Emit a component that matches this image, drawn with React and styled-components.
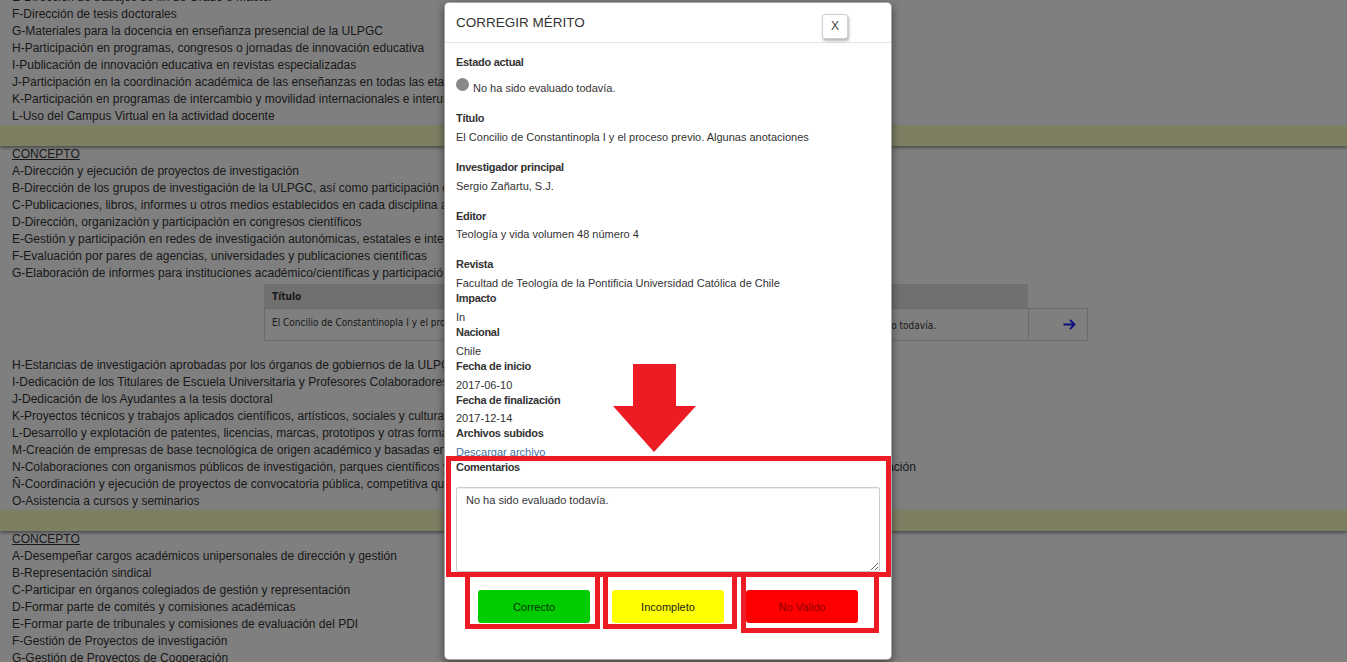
import React from 'react';
import styled, { createGlobalStyle } from 'styled-components';

const GlobalStyle = createGlobalStyle`
  html, body {
    margin: 0;
    padding: 0;
    background: #fff;
  }
  body {
    font-family: "Liberation Sans", Arial, sans-serif;
    color: #333;
    overflow: hidden;
  }
  * {
    box-sizing: border-box;
  }
`;

const Page = styled.div`
  position: relative;
  width: 1347px;
  height: 662px;
  overflow: hidden;
  background: #fff;
`;

/* page behind the dialog, scrolled a little */
const Content = styled.div`
  margin-top: -11px;
  font-size: 12px;
  line-height: 17px;
`;

const ConceptList = styled.ul`
  list-style: none;
  margin: 0;
  padding: 0 0 0 12px;
`;

const ConceptItem = styled.li`
  white-space: nowrap;
  text-decoration: ${(p) => (p.$heading ? 'underline' : 'none')};
`;

const Band = styled.div`
  height: 21px;
  background: #fdfdc4;
  box-shadow: 0 2px 3px rgba(0, 0, 0, 0.4);
`;

const MeritTable = styled.div`
  display: grid;
  grid-template-columns: 764px 60px;
  margin: 2px 0 16px 264px;
  font-family: "DejaVu Sans Condensed", "DejaVu Sans", sans-serif;
  font-size: 10px;
  color: #333;
`;

const HeadCell = styled.div`
  height: 24px;
  display: flex;
  align-items: center;
  padding-left: 8px;
  background: #e0e0e0;
  font-weight: bold;
`;

const RowCell = styled.div`
  height: 33px;
  display: grid;
  grid-template-columns: 440px 1fr;
  border: 1px solid #d6d6d6;
  border-right: none;
  padding: 5px 92px 0 7px;
  white-space: nowrap;
`;

const TitleText = styled.span`
  overflow: hidden;
`;

const StatusText = styled.span`
  align-self: end;
  justify-self: end;
  padding-bottom: 6px;
`;

const ArrowCell = styled.div`
  height: 33px;
  display: flex;
  align-items: center;
  justify-content: center;
  padding-left: 22px;
  border: 1px solid #d6d6d6;
  color: #1c1cff;
`;

const Overlay = styled.div`
  position: absolute;
  inset: 0;
  background: rgba(0, 0, 0, 0.5);
`;

const Modal = styled.div`
  position: absolute;
  top: 2px;
  left: 444px;
  width: 448px;
  height: 658px;
  background: #fff;
  border: 1px solid rgba(0, 0, 0, 0.35);
  border-radius: 5px;
  box-shadow: 0 3px 9px rgba(0, 0, 0, 0.5);
  font-size: 11px;
  color: #333;
`;

const ModalHeader = styled.div`
  height: 40px;
  display: flex;
  align-items: center;
  justify-content: space-between;
  padding: 0 43px 0 11px;
  border-bottom: 1px solid #e5e5e5;
`;

const ModalTitle = styled.h4`
  margin: 0;
  font-size: 13.5px;
  font-weight: normal;
  color: #333;
`;

const CloseButton = styled.button`
  width: 26px;
  height: 25px;
  margin-top: 7px;
  padding: 0;
  background: #fff;
  border: 1px solid #d0d0d0;
  border-radius: 3px;
  box-shadow: 1px 2px 3px rgba(0, 0, 0, 0.3);
  font-family: inherit;
  font-size: 12px;
  color: #444;
`;

const ModalBody = styled.div`
  padding: 12px 11px 0 11px;
`;

const Field = styled.div`
  margin-top: ${(p) => (p.$spaced ? '15px' : '0')};
`;

const Label = styled.div`
  line-height: 15px;
  font-weight: bold;
  letter-spacing: -0.3px;
  margin-bottom: ${(p) => (p.$flush ? '0' : '3.8px')};
  color: #333;
`;

const Value = styled.div`
  line-height: 15px;
  color: #333;
`;

const FileLink = styled.a`
  display: block;
  line-height: 15px;
  color: #41709f;
  text-decoration: none;
`;

const StatusRow = styled.div`
  display: flex;
  align-items: flex-start;
  gap: 4px;
  margin-top: 8px;
`;

const Dot = styled.span`
  width: 13px;
  height: 13px;
  border-radius: 50%;
  background: ${(p) => p.$color};
`;

const StatusLabel = styled.span`
  padding-top: 3px;
  line-height: 15px;
`;

const CommentBox = styled.textarea`
  display: block;
  width: 100%;
  height: 85px;
  margin-top: 12px;
  padding: 6px 9px;
  border: 1px solid #ccc;
  border-radius: 2px;
  box-shadow: inset 0 1px 1px rgba(0, 0, 0, 0.075);
  font-family: inherit;
  font-size: 11px;
  color: #333;
  resize: vertical;
`;

const ButtonRow = styled.div`
  display: flex;
  justify-content: center;
  gap: 22px;
  margin-top: 18px;
`;

const VerdictButton = styled.button`
  width: 112px;
  height: 33px;
  border: none;
  border-radius: 3px;
  background: ${(p) => p.$bg};
  color: ${(p) => p.$fg};
  font-family: inherit;
  font-size: 11px;
`;

const Frame = styled.div`
  position: absolute;
  left: ${(p) => p.$x}px;
  top: ${(p) => p.$y}px;
  width: ${(p) => p.$w}px;
  height: ${(p) => p.$h}px;
  border: 5px solid #ed1c24;
  pointer-events: none;
`;

const Pointer = styled.svg`
  position: absolute;
  left: 613px;
  top: 364px;
`;

const teaching = [
  'E-Dirección de trabajos de fin de Grado o Máster',
  'F-Dirección de tesis doctorales',
  'G-Materiales para la docencia en enseñanza presencial de la ULPGC',
  'H-Participación en programas, congresos o jornadas de innovación educativa',
  'I-Publicación de innovación educativa en revistas especializadas',
  'J-Participación en la coordinación académica de las enseñanzas en todas las etapas',
  'K-Participación en programas de intercambio y movilidad internacionales e interuniversitarios',
  'L-Uso del Campus Virtual en la actividad docente',
];

const researchTop = [
  'A-Dirección y ejecución de proyectos de investigación',
  'B-Dirección de los grupos de investigación de la ULPGC, así como participación en ellos',
  'C-Publicaciones, libros, informes u otros medios establecidos en cada disciplina académica',
  'D-Dirección, organización y participación en congresos científicos',
  'E-Gestión y participación en redes de investigación autonómicas, estatales e internacionales',
  'F-Evaluación por pares de agencias, universidades y publicaciones científicas',
  'G-Elaboración de informes para instituciones académico/científicas y participación en comités',
];

const researchBottom = [
  'H-Estancias de investigación aprobadas por los órganos de gobiernos de la ULPGC',
  'I-Dedicación de los Titulares de Escuela Universitaria y Profesores Colaboradores a la tesis doctoral',
  'J-Dedicación de los Ayudantes a la tesis doctoral',
  'K-Proyectos técnicos y trabajos aplicados científicos, artísticos, sociales y culturales',
  'L-Desarrollo y explotación de patentes, licencias, marcas, prototipos y otras formas de protección',
  'M-Creación de empresas de base tecnológica de origen académico y basadas en el conocimiento',
  'N-Colaboraciones con organismos públicos de investigación, parques científicos y tecnológicos, empresas y otras entidades públicas para la transferencia y la innovación',
  'Ñ-Coordinación y ejecución de proyectos de convocatoria pública, competitiva que no sean de investigación',
  'O-Asistencia a cursos y seminarios',
];

const management = [
  'A-Desempeñar cargos académicos unipersonales de dirección y gestión',
  'B-Representación sindical',
  'C-Participar en órganos colegiados de gestión y representación',
  'D-Formar parte de comités y comisiones académicas',
  'E-Formar parte de tribunales y comisiones de evaluación del PDI',
  'F-Gestión de Proyectos de investigación',
  'G-Gestión de Proyectos de Cooperación',
];

const details = [
  { label: 'Revista', value: 'Facultad de Teología de la Pontificia Universidad Católica de Chile', spaced: true },
  { label: 'Impacto', value: 'In' },
  { label: 'Nacional', value: 'Chile' },
  { label: 'Fecha de inicio', value: '2017-06-10' },
  { label: 'Fecha de finalización', value: '2017-12-14' },
];

const ConceptBlock = ({ items, heading }) => (
  <ConceptList>
    {heading && <ConceptItem $heading>CONCEPTO</ConceptItem>}
    {items.map((text) => (
      <ConceptItem key={text}>{text}</ConceptItem>
    ))}
  </ConceptList>
);

const App = () => (
  <Page>
    <GlobalStyle />
    <Content>
      <ConceptBlock items={teaching} />
      <Band />
      <ConceptBlock items={researchTop} heading />
      <MeritTable>
        <HeadCell>Título</HeadCell>
        <div />
        <RowCell>
          <TitleText>El Concilio de Constantinopla I y el proceso previo. Algunas anotaciones</TitleText>
          <StatusText>No ha sido evaluado todavía.</StatusText>
        </RowCell>
        <ArrowCell>
          <svg width="13" height="11" viewBox="0 0 13 11" fill="none" stroke="currentColor" strokeWidth="1.8">
            <path d="M0.5 5.5H11.5M7 1L11.5 5.5L7 10" />
          </svg>
        </ArrowCell>
      </MeritTable>
      <ConceptBlock items={researchBottom} />
      <Band />
      <ConceptBlock items={management} heading />
    </Content>

    <Overlay />

    <Modal>
      <ModalHeader>
        <ModalTitle>CORREGIR MÉRITO</ModalTitle>
        <CloseButton>X</CloseButton>
      </ModalHeader>
      <ModalBody>
        <Field>
          <Label $flush>Estado actual</Label>
          <StatusRow>
            <Dot $color="#888" />
            <StatusLabel>No ha sido evaluado todavía.</StatusLabel>
          </StatusRow>
        </Field>
        <Field $spaced>
          <Label>Título</Label>
          <Value>El Concilio de Constantinopla I y el proceso previo. Algunas anotaciones</Value>
        </Field>
        <Field $spaced>
          <Label>Investigador principal</Label>
          <Value>Sergio Zañartu, S.J.</Value>
        </Field>
        <Field $spaced>
          <Label>Editor</Label>
          <Value>Teología y vida volumen 48 número 4</Value>
        </Field>
        {details.map((d) => (
          <Field key={d.label} $spaced={d.spaced}>
            <Label>{d.label}</Label>
            <Value>{d.value}</Value>
          </Field>
        ))}
        <Field>
          <Label>Archivos subidos</Label>
          <FileLink href="#">Descargar archivo</FileLink>
        </Field>
        <Field>
          <Label $flush>Comentarios</Label>
          <CommentBox readOnly defaultValue="No ha sido evaluado todavía." />
        </Field>
        <ButtonRow>
          <VerdictButton $bg="#00cc00" $fg="rgba(0,0,0,0.8)">Correcto</VerdictButton>
          <VerdictButton $bg="#ffff00" $fg="#222">Incompleto</VerdictButton>
          <VerdictButton $bg="#ff0000" $fg="rgba(0,0,0,0.5)">No Valido</VerdictButton>
        </ButtonRow>
      </ModalBody>
    </Modal>

    <Pointer width="83" height="88" viewBox="0 0 83 88">
      <polygon points="20,0 63,0 63,42 83,42 41,88 0,42 20,42" fill="#ed1c24" />
    </Pointer>
    <Frame $x={446} $y={456} $w={445} $h={121} />
    <Frame $x={465} $y={572} $w={135} $h={57} />
    <Frame $x={603} $y={572} $w={134} $h={57} />
    <Frame $x={741} $y={572} $w={138} $h={61} />
  </Page>
);

export default App;
